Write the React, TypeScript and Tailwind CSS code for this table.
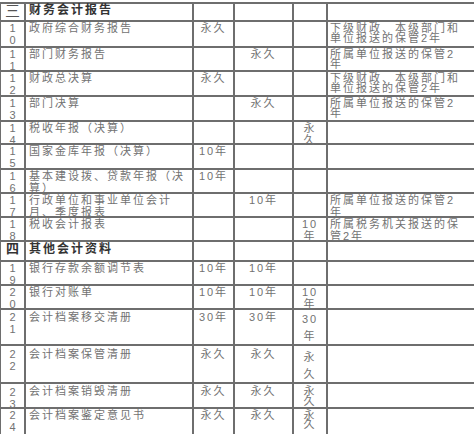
import React from "react";

type Row = {
  h: string;
  c1: React.ReactNode;
  c2: React.ReactNode;
  c3?: React.ReactNode;
  c4?: React.ReactNode;
  c5?: React.ReactNode;
  c6?: React.ReactNode;
  all?: string;
  c1cls?: string;
  c2cls?: string;
  c5cls?: string;
  c6cls?: string;
};

const L = ({ a, b }: { a: React.ReactNode; b: React.ReactNode }) => (
  <>
    {a}
    <br />
    {b}
  </>
);

const rows: Row[] = [
  {
    h: "h-[18px]",
    c1: "三",
    c1cls: "text-[15px] leading-[13px] text-[#555]",
    c2: "财务会计报告",
    c2cls: "font-bold text-[12px] leading-[13px] text-[#333]",
  },
  {
    h: "h-[26px]",
    c1: <L a="1" b="0" />,
    c2: "政府综合财务报告",
    c3: "永久",
    c6: <L a="下级财政、本级部门和" b="单位报送的保管2年" />,
    c6cls: "leading-[10px] pt-[1px]",
  },
  {
    h: "h-[24px]",
    c1: <L a="1" b="1" />,
    c2: "部门财务报告",
    c4: "永久",
    c6: <L a="所属单位报送的保管2" b="年" />,
    c6cls: "leading-[10px] pt-[1px]",
  },
  {
    h: "h-[25px]",
    c1: <L a="1" b="2" />,
    c2: "财政总决算",
    c3: "永久",
    c6: <L a="下级财政、本级部门和" b="单位报送的保管2年" />,
    c6cls: "leading-[10px] pt-[1px]",
  },
  {
    h: "h-[25px]",
    c1: <L a="1" b="3" />,
    c2: "部门决算",
    c4: "永久",
    c6: <L a="所属单位报送的保管2" b="年" />,
    c6cls: "leading-[10px] pt-[1px]",
  },
  {
    h: "h-[23px]",
    c1: <L a="1" b="4" />,
    c2: "税收年报（决算）",
    c5: <L a="永" b="久" />,
  },
  {
    h: "h-[25px]",
    c1: <L a="1" b="5" />,
    c2: "国家金库年报（决算）",
    c3: "10年",
  },
  {
    h: "h-[24px]",
    c1: <L a="1" b="6" />,
    c2: <L a="基本建设拨、贷款年报（决" b="算）" />,
    c3: "10年",
  },
  {
    h: "h-[24px]",
    c1: <L a="1" b="7" />,
    c2: <L a="行政单位和事业单位会计" b="月、季度报表" />,
    c4: "10年",
    c6: <L a="所属单位报送的保管2" b="年" />,
  },
  {
    h: "h-[24px]",
    c1: <L a="1" b="8" />,
    c2: "税收会计报表",
    c5: <L a="10" b="年" />,
    c6: <L a="所属税务机关报送的保" b="管2年" />,
  },
  {
    h: "h-[20px]",
    c1: "四",
    c1cls: "font-bold text-[13px] leading-[14px] text-[#333]",
    c2: "其他会计资料",
    c2cls: "font-bold text-[12px] leading-[14px] text-[#333]",
  },
  {
    h: "h-[24px]",
    c1: <L a="1" b="9" />,
    c2: "银行存款余额调节表",
    c3: "10年",
    c4: "10年",
  },
  {
    h: "h-[24px]",
    c1: <L a="2" b="0" />,
    c2: "银行对账单",
    c3: "10年",
    c4: "10年",
    c5: <L a="10" b="年" />,
  },
  {
    h: "h-[36px]",
    all: "pt-[1px]",
    c1: <L a="2" b="1" />,
    c2: "会计档案移交清册",
    c3: "30年",
    c4: "30年",
    c5: <L a="30" b="年" />,
    c5cls: "leading-[17px]",
  },
  {
    h: "h-[38px]",
    all: "pt-[2px]",
    c1: <L a="2" b="2" />,
    c2: "会计档案保管清册",
    c3: "永久",
    c4: "永久",
    c5: <L a="永" b="久" />,
    c5cls: "leading-[17px] pt-[3px]",
  },
  {
    h: "h-[25px]",
    all: "pt-[1px]",
    c1: <L a="2" b="3" />,
    c1cls: "pt-[2px]",
    c2: "会计档案销毁清册",
    c3: "永久",
    c4: "永久",
    c5: <L a="永" b="久" />,
    c5cls: "leading-[10px] pt-[2px]",
  },
  {
    h: "h-[30px]",
    c1: <L a="2" b="4" />,
    c2: "会计档案鉴定意见书",
    c3: "永久",
    c4: "永久",
    c5: <L a="永" b="久" />,
    c5cls: "leading-[9px] pt-[2px]",
  },
];

const cell = "shrink-0 border-r-2 border-[#6e6e6e] whitespace-nowrap";

export default function App() {
  return (
    <div className="w-[474px] h-[434px] overflow-hidden bg-white pt-[2px] font-['Liberation_Sans','Noto_Sans_CJK_SC',sans-serif] text-[11px] leading-[12px] text-[#727272]">
      <div className="w-[480px] border-t-2 border-l border-[#6e6e6e] flex flex-col">
        {rows.map((r, i) => (
          <div key={i} className={`${r.h} shrink-0 flex border-b-2 border-[#6e6e6e]`}>
            <div className={`${cell} w-[25px] text-center ${r.all ?? ""} ${r.c1cls ?? ""}`}>{r.c1}</div>
            <div className={`${cell} w-[168px] pl-[3px] tracking-[2px] ${r.all ?? ""} ${r.c2cls ?? ""}`}>{r.c2}</div>
            <div className={`${cell} w-[41px] text-center tracking-[2px] ${r.all ?? ""}`}>{r.c3}</div>
            <div className={`${cell} w-[59px] text-center tracking-[2px] ${r.all ?? ""}`}>{r.c4}</div>
            <div className={`${cell} w-[34px] text-center tracking-[2px] ${r.all ?? ""} ${r.c5cls ?? ""}`}>{r.c5}</div>
            <div className={`${cell} flex-1 pl-[2px] tracking-[2px] ${r.all ?? ""} ${r.c6cls ?? ""}`}>{r.c6}</div>
          </div>
        ))}
      </div>
    </div>
  );
}
